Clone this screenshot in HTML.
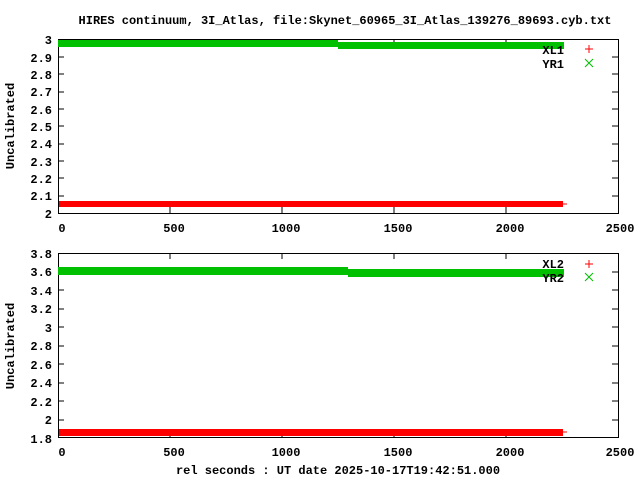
<!DOCTYPE html>
<html><head><meta charset="utf-8"><style>
html,body{margin:0;padding:0;background:#fff;width:640px;height:480px;overflow:hidden}
svg{display:block}
text{font-family:"Liberation Mono","DejaVu Sans Mono",monospace;font-size:12px;font-weight:bold;fill:#000}
</style></head><body>
<svg width="640" height="480" viewBox="0 0 640 480" xmlns="http://www.w3.org/2000/svg">
<text x="345" y="24" text-anchor="middle">HIRES continuum, 3I_Atlas, file:Skynet_60965_3I_Atlas_139276_89693.cyb.txt</text>
<!-- top plot -->
<g stroke="#000" stroke-width="1" fill="none">
<rect x="58.5" y="39.5" width="560" height="174"/>
<path d="M58 57h6M58 74h6M58 92h6M58 109h6M58 126h6M58 144h6M58 161h6M58 178h6M58 196h6M618 57h-6M618 74h-6M618 92h-6M618 109h-6M618 126h-6M618 144h-6M618 161h-6M618 178h-6M618 196h-6M170 213v-6M282 213v-6M394 213v-6M506 213v-6M170 39v6M282 39v6M394 39v6M506 39v6"/>
</g>
<g text-anchor="end">
<text x="52" y="44">3</text><text x="52" y="62">2.9</text><text x="52" y="79">2.8</text><text x="52" y="96">2.7</text><text x="52" y="114">2.6</text><text x="52" y="131">2.5</text><text x="52" y="148">2.4</text><text x="52" y="166">2.3</text><text x="52" y="183">2.2</text><text x="52" y="200">2.1</text><text x="52" y="218">2</text>
</g>
<g text-anchor="middle">
<text x="62" y="232">0</text><text x="174" y="232">500</text><text x="286" y="232">1000</text><text x="398" y="232">1500</text><text x="510" y="232">2000</text><text x="620" y="232">2500</text>
</g>
<text transform="translate(14,126) rotate(-90)" text-anchor="middle">Uncalibrated</text>
<rect x="58" y="40" width="280" height="7" fill="#00c000"/>
<rect x="338" y="42" width="226" height="7" fill="#00c000"/>
<rect x="59" y="201" width="504" height="6" fill="#f00"/>
<path d="M563 204h4" stroke="#f00"/>
<text x="564" y="54" text-anchor="end">XL1</text>
<text x="564" y="68" text-anchor="end">YR1</text>
<path d="M585 49h8M589 45v8" stroke="#f00"/>
<path d="M585 59l8 8M593 59l-8 8" stroke="#00c000"/>
<!-- bottom plot -->
<g stroke="#000" stroke-width="1" fill="none">
<rect x="58.5" y="253.5" width="560" height="184"/>
<path d="M58 272h6M58 290h6M58 309h6M58 327h6M58 346h6M58 364h6M58 383h6M58 401h6M58 420h6M618 272h-6M618 290h-6M618 309h-6M618 327h-6M618 346h-6M618 364h-6M618 383h-6M618 401h-6M618 420h-6M170 437v-6M282 437v-6M394 437v-6M506 437v-6M170 253v6M282 253v6M394 253v6M506 253v6"/>
</g>
<g text-anchor="end">
<text x="52" y="258">3.8</text><text x="52" y="276">3.6</text><text x="52" y="295">3.4</text><text x="52" y="313">3.2</text><text x="52" y="332">3</text><text x="52" y="350">2.8</text><text x="52" y="369">2.6</text><text x="52" y="387">2.4</text><text x="52" y="406">2.2</text><text x="52" y="424">2</text><text x="52" y="443">1.8</text>
</g>
<g text-anchor="middle">
<text x="62" y="456">0</text><text x="174" y="456">500</text><text x="286" y="456">1000</text><text x="398" y="456">1500</text><text x="510" y="456">2000</text><text x="620" y="456">2500</text>
</g>
<text transform="translate(14,346) rotate(-90)" text-anchor="middle">Uncalibrated</text>
<text x="338" y="474" text-anchor="middle">rel seconds : UT date 2025-10-17T19:42:51.000</text>
<rect x="58" y="267" width="290" height="8" fill="#00c000"/>
<rect x="348" y="269" width="216" height="8" fill="#00c000"/>
<rect x="59" y="429" width="504" height="7" fill="#f00"/>
<path d="M563 432h4" stroke="#f00"/>
<text x="564" y="268" text-anchor="end">XL2</text>
<text x="564" y="282" text-anchor="end" fill="#000">YR2</text>
<path d="M585 264h8M589 260v8" stroke="#f00"/>
<path d="M585 273l8 8M593 273l-8 8" stroke="#00c000"/>
</svg>
</body></html>
